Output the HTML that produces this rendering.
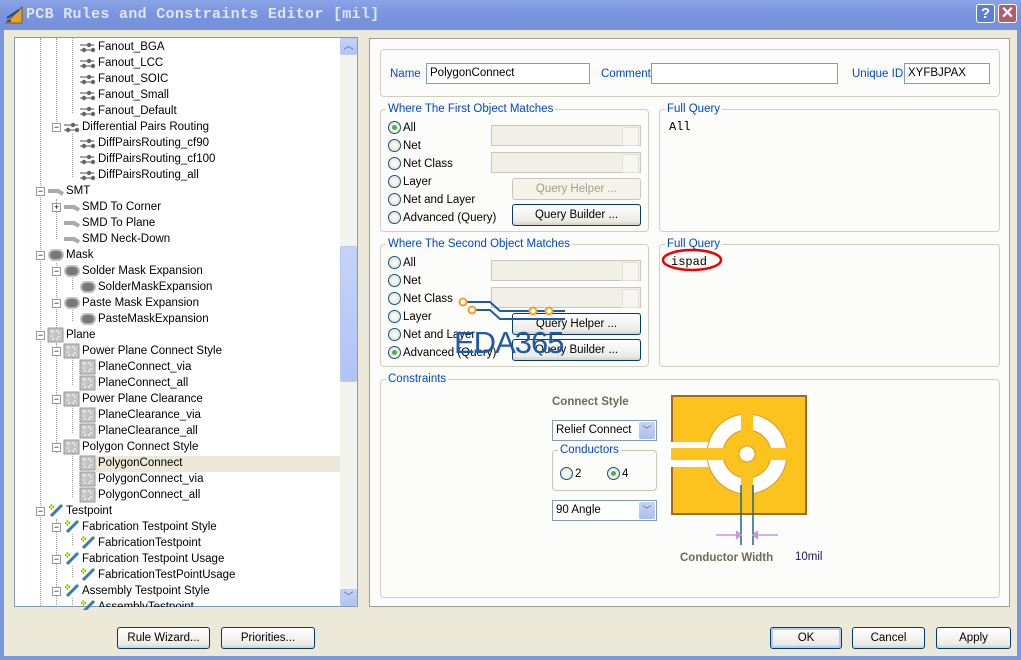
<!DOCTYPE html>
<html><head><meta charset="utf-8"><style>
*{margin:0;padding:0;box-sizing:border-box}
body{width:1021px;height:660px;overflow:hidden;background:#ece9d8;font-family:"Liberation Sans",sans-serif;font-size:11.5px;color:#000;position:relative}
.a{position:absolute}
#title{left:0;top:0;width:1021px;height:30px;background:linear-gradient(#8aa4e6,#7b96df 40%,#7490da);}
#title span{position:absolute;left:26px;top:6px;font-family:"Liberation Mono",monospace;font-weight:bold;font-size:15px;color:#dfe6f8;letter-spacing:0.3px}
.frame{background:#7b96df}
#tree{left:14px;top:37px;width:344px;height:570px;background:#fff;border:1px solid #7f9db9;overflow:hidden}
.r{position:absolute;height:16px;line-height:16px;white-space:nowrap}
.bx{position:absolute;width:9px;height:9px;border:1px solid #919b9c;background:#fff;font-size:9px;line-height:7px;text-align:center;color:#000}
.vl{position:absolute;width:0;border-left:1px dotted #a0a0a0}
.sb{position:absolute;right:0;top:0;width:17px;height:100%;background:#f4f3ee}
.sbb{position:absolute;left:0;width:17px;height:17px;background:linear-gradient(#c6d3f7,#b0c4f5);border:1px solid #b7c9f2;border-radius:2px;color:#4d6185;font-size:10px;text-align:center;line-height:15px}
#right{left:369px;top:38px;width:641px;height:569px;background:#fcfcfa;border:1px solid #a09f94}
.g{position:absolute;border:1px solid #d0d0bf;border-radius:4px}
.gt{position:absolute;top:-8px;left:5px;background:#fcfcfa;padding:0 2px;color:#0046d5;line-height:14px}
.lbl{position:absolute;color:#0046d5;line-height:14px}
.inp{position:absolute;height:21px;border:1px solid #7f9db9;background:#fff;padding-left:3px;line-height:19px}
.rad{position:absolute;width:13px;height:13px;border:1px solid #1c5180;border-radius:50%;background:radial-gradient(#fff,#dcdcd2)}
.rad.on::after{content:"";position:absolute;left:3px;top:3px;width:5px;height:5px;border-radius:50%;background:#3fb83f}
.rt{position:absolute;line-height:14px}
.cb{position:absolute;height:21px;border:1px solid #c9c7ba;background:#f0efe8}
.cb::after{content:"";position:absolute;right:1px;top:1px;width:15px;height:17px;background:#f7f6f1;border:1px solid #e2e0d6}
.cbe{position:absolute;height:21px;border:1px solid #7f9db9;background:#fff;padding-left:3px;line-height:19px}
.dd{position:absolute;right:1px;top:1px;width:16px;height:17px;background:linear-gradient(#c6d3f7,#aec0f0);border-radius:2px;color:#4d6185;font-size:9px;text-align:center;line-height:17px}
.btn{position:absolute;height:22px;border:1px solid #003c74;border-radius:3px;background:linear-gradient(#fff,#ecebe6 80%,#d6d0c5);text-align:center;line-height:20px}
.btn.dis{border-color:#c9c7ba;color:#a19e8f;background:#f5f4ea}
</style></head><body>
<div class="a frame" style="left:0;top:0;width:4px;height:660px"></div>
<div class="a frame" style="right:0;top:0;width:4px;height:660px"></div>
<div class="a frame" style="left:0;bottom:0;width:1021px;height:4px"></div>
<div id="title" class="a"><svg class="a" style="left:5px;top:6px" width="18" height="18"><path d="M1 17 L17 1 L17 17Z" fill="#e6a228" stroke="#8a5a10"/><path d="M2 15 L6 15 M2 12 L14 4" stroke="#244b9c" stroke-width="2"/></svg><span>PCB Rules and Constraints Editor [mil]</span>
<div class="a" style="left:976px;top:4px;width:19px;height:19px;background:#5a7edc;border:1px solid #fff;border-radius:3px;color:#fff;font-weight:bold;font-size:15px;text-align:center;line-height:18px">?</div>
<div class="a" style="left:998px;top:4px;width:19px;height:19px;background:#b05e6c;border:1px solid #fff;border-radius:3px;color:#fff;font-weight:bold;font-size:16px;text-align:center;line-height:17px">✕</div>
</div>

<div id="tree" class="a">
<div class="vl" style="left:25px;top:0;height:570px"></div>
<div class="vl" style="left:41px;top:0;height:90px"></div>
<div class="vl" style="left:57px;top:0;height:75px"></div>
<div class="vl" style="left:57px;top:96px;height:43px"></div>
<div class="vl" style="left:41px;top:161px;height:40px"></div>
<div class="vl" style="left:41px;top:225px;height:65px"></div>
<div class="vl" style="left:57px;top:240px;height:11px"></div>
<div class="vl" style="left:57px;top:272px;height:11px"></div>
<div class="vl" style="left:41px;top:305px;height:110px"></div>
<div class="vl" style="left:57px;top:320px;height:27px"></div>
<div class="vl" style="left:57px;top:368px;height:27px"></div>
<div class="vl" style="left:57px;top:416px;height:43px"></div>
<div class="vl" style="left:41px;top:481px;height:90px"></div>
<div class="vl" style="left:57px;top:496px;height:11px"></div>
<div class="vl" style="left:57px;top:528px;height:11px"></div>
<div class="vl" style="left:57px;top:560px;height:11px"></div>
<div style="position:absolute;left:81px;top:418px;width:245px;height:16px;background:#ece9d8"></div>
<div class="sb"><div class="sbb" style="top:0">︿</div><div class="sbb" style="top:208px;height:136px"></div><div class="sbb" style="bottom:0">﹀</div></div>
</div>
<div class="a" style="left:0;top:0">
<div class="r" style="top:39px;left:98px">Fanout_BGA</div>
<div class="r" style="top:55px;left:98px">Fanout_LCC</div>
<div class="r" style="top:71px;left:98px">Fanout_SOIC</div>
<div class="r" style="top:87px;left:98px">Fanout_Small</div>
<div class="r" style="top:103px;left:98px">Fanout_Default</div>
<div class="r" style="top:119px;left:82px">Differential Pairs Routing</div>
<div class="r" style="top:135px;left:98px">DiffPairsRouting_cf90</div>
<div class="r" style="top:151px;left:98px">DiffPairsRouting_cf100</div>
<div class="r" style="top:167px;left:98px">DiffPairsRouting_all</div>
<div class="r" style="top:183px;left:66px">SMT</div>
<div class="r" style="top:199px;left:82px">SMD To Corner</div>
<div class="r" style="top:215px;left:82px">SMD To Plane</div>
<div class="r" style="top:231px;left:82px">SMD Neck-Down</div>
<div class="r" style="top:247px;left:66px">Mask</div>
<div class="r" style="top:263px;left:82px">Solder Mask Expansion</div>
<div class="r" style="top:279px;left:98px">SolderMaskExpansion</div>
<div class="r" style="top:295px;left:82px">Paste Mask Expansion</div>
<div class="r" style="top:311px;left:98px">PasteMaskExpansion</div>
<div class="r" style="top:327px;left:66px">Plane</div>
<div class="r" style="top:343px;left:82px">Power Plane Connect Style</div>
<div class="r" style="top:359px;left:98px">PlaneConnect_via</div>
<div class="r" style="top:375px;left:98px">PlaneConnect_all</div>
<div class="r" style="top:391px;left:82px">Power Plane Clearance</div>
<div class="r" style="top:407px;left:98px">PlaneClearance_via</div>
<div class="r" style="top:423px;left:98px">PlaneClearance_all</div>
<div class="r" style="top:439px;left:82px">Polygon Connect Style</div>
<div class="r" style="top:455px;left:98px">PolygonConnect</div>
<div class="r" style="top:471px;left:98px">PolygonConnect_via</div>
<div class="r" style="top:487px;left:98px">PolygonConnect_all</div>
<div class="r" style="top:503px;left:66px">Testpoint</div>
<div class="r" style="top:519px;left:82px">Fabrication Testpoint Style</div>
<div class="r" style="top:535px;left:98px">FabricationTestpoint</div>
<div class="r" style="top:551px;left:82px">Fabrication Testpoint Usage</div>
<div class="r" style="top:567px;left:98px">FabricationTestPointUsage</div>
<div class="r" style="top:583px;left:82px">Assembly Testpoint Style</div>
<div class="r" style="top:599px;left:98px;height:8px;overflow:hidden">AssemblyTestpoint</div>
</div>
<div class="a" style="left:0;top:0">
<div class="bx" style="left:52px;top:123px">−</div>
<div class="bx" style="left:36px;top:187px">−</div>
<div class="bx" style="left:52px;top:203px">+</div>
<div class="bx" style="left:36px;top:251px">−</div>
<div class="bx" style="left:52px;top:267px">−</div>
<div class="bx" style="left:52px;top:299px">−</div>
<div class="bx" style="left:36px;top:331px">−</div>
<div class="bx" style="left:52px;top:347px">−</div>
<div class="bx" style="left:52px;top:395px">−</div>
<div class="bx" style="left:52px;top:443px">−</div>
<div class="bx" style="left:36px;top:507px">−</div>
<div class="bx" style="left:52px;top:523px">−</div>
<div class="bx" style="left:52px;top:555px">−</div>
<div class="bx" style="left:52px;top:587px">−</div>
<svg class="a" style="left:0;top:0" width="360" height="610">
<defs>
<g id="fo"><path d="M0 4H14M0 9H14" stroke="#888" stroke-width="1.5"/><circle cx="9" cy="4" r="2.2" fill="#666"/><circle cx="4" cy="9" r="2.2" fill="#666"/><circle cx="13" cy="9" r="2.2" fill="#666"/></g>
<g id="sm"><path d="M0 5H10L15 8" stroke="#aaa" stroke-width="4" fill="none"/></g>
<g id="mk"><rect x="1" y="1" width="14" height="10" rx="5" fill="#777" stroke="#bbb" stroke-width="2"/></g>
<g id="pl"><rect x="0" y="0" width="15" height="14" fill="#c4c4c4" stroke="#999"/><path d="M4 3H11V11H4Z" stroke="#fff" stroke-dasharray="2 2" fill="none"/></g>
<g id="tp"><path d="M3 13L14 2" stroke="#3a7ea8" stroke-width="3"/><path d="M1 4H6M3.5 1.5V6.5" stroke="#1a9a1a" stroke-width="1.5"/><circle cx="3.5" cy="4" r="1.5" fill="#ee0"/></g>
</defs>
<use href="#fo" x="80" y="41"/><use href="#fo" x="80" y="57"/><use href="#fo" x="80" y="73"/><use href="#fo" x="80" y="89"/><use href="#fo" x="80" y="105"/>
<use href="#fo" x="64" y="121"/><use href="#fo" x="80" y="137"/><use href="#fo" x="80" y="153"/><use href="#fo" x="80" y="169"/>
<use href="#sm" x="48" y="186"/><use href="#sm" x="64" y="202"/><use href="#sm" x="64" y="218"/><use href="#sm" x="64" y="234"/>
<use href="#mk" x="48" y="249"/><use href="#mk" x="64" y="265"/><use href="#mk" x="80" y="281"/><use href="#mk" x="64" y="297"/><use href="#mk" x="80" y="313"/>
<use href="#pl" x="48" y="328"/><use href="#pl" x="64" y="344"/><use href="#pl" x="80" y="360"/><use href="#pl" x="80" y="376"/><use href="#pl" x="64" y="392"/><use href="#pl" x="80" y="408"/><use href="#pl" x="80" y="424"/><use href="#pl" x="64" y="440"/><use href="#pl" x="80" y="456"/><use href="#pl" x="80" y="472"/><use href="#pl" x="80" y="488"/>
<use href="#tp" x="48" y="503"/><use href="#tp" x="64" y="519"/><use href="#tp" x="80" y="535"/><use href="#tp" x="64" y="551"/><use href="#tp" x="80" y="567"/><use href="#tp" x="64" y="583"/><use href="#tp" x="80" y="599"/>
</svg>
</div>

<div id="right" class="a">
<div class="g" style="left:10px;top:10px;width:620px;height:48px">
<div class="lbl" style="left:9px;top:17px">Name</div>
<div class="inp" style="left:45px;top:13px;width:164px">PolygonConnect</div>
<div class="lbl" style="left:220px;top:17px">Comment</div>
<div class="inp" style="left:270px;top:13px;width:187px"></div>
<div class="lbl" style="left:471px;top:17px">Unique ID</div>
<div class="inp" style="left:523px;top:13px;width:86px">XYFBJPAX</div>
</div>

<div class="g" style="left:10px;top:70px;width:269px;height:123px"><div class="gt">Where The First Object Matches</div>
<div class="rad on" style="left:7px;top:11px"></div><div class="rt" style="left:22px;top:11px">All</div>
<div class="rad" style="left:7px;top:29px"></div><div class="rt" style="left:22px;top:29px">Net</div>
<div class="rad" style="left:7px;top:47px"></div><div class="rt" style="left:22px;top:47px">Net Class</div>
<div class="rad" style="left:7px;top:65px"></div><div class="rt" style="left:22px;top:65px">Layer</div>
<div class="rad" style="left:7px;top:83px"></div><div class="rt" style="left:22px;top:83px">Net and Layer</div>
<div class="rad" style="left:7px;top:101px"></div><div class="rt" style="left:22px;top:101px">Advanced (Query)</div>
<div class="cb" style="left:110px;top:15px;width:150px"></div>
<div class="cb" style="left:110px;top:42px;width:150px"></div>
<div class="btn dis" style="left:131px;top:68px;width:129px">Query Helper ...</div>
<div class="btn" style="left:131px;top:94px;width:129px">Query Builder ...</div>
</div>
<div class="g" style="left:289px;top:70px;width:341px;height:123px"><div class="gt">Full Query</div>
<div class="a" style="left:9px;top:10px;font-family:'Liberation Mono',monospace;font-size:12px">All</div></div>

<div class="g" style="left:10px;top:205px;width:269px;height:123px"><div class="gt">Where The Second Object Matches</div>
<div class="rad" style="left:7px;top:11px"></div><div class="rt" style="left:22px;top:11px">All</div>
<div class="rad" style="left:7px;top:29px"></div><div class="rt" style="left:22px;top:29px">Net</div>
<div class="rad" style="left:7px;top:47px"></div><div class="rt" style="left:22px;top:47px">Net Class</div>
<div class="rad" style="left:7px;top:65px"></div><div class="rt" style="left:22px;top:65px">Layer</div>
<div class="rad" style="left:7px;top:83px"></div><div class="rt" style="left:22px;top:83px">Net and Layer</div>
<div class="rad on" style="left:7px;top:101px"></div><div class="rt" style="left:22px;top:101px">Advanced (Query)</div>
<div class="cb" style="left:110px;top:15px;width:150px"></div>
<div class="cb" style="left:110px;top:42px;width:150px"></div>
<div class="btn" style="left:131px;top:68px;width:129px">Query Helper ...</div>
<div class="btn" style="left:131px;top:94px;width:129px">Query Builder ...</div>
</div>
<div class="g" style="left:289px;top:205px;width:341px;height:123px"><div class="gt">Full Query</div>
<div class="a" style="left:11px;top:10px;font-family:'Liberation Mono',monospace;font-size:12px">ispad</div>
<svg class="a" style="left:1px;top:3px" width="64" height="26"><ellipse cx="31" cy="12" rx="29" ry="10" fill="none" stroke="#e00" stroke-width="2.5"/></svg></div>

<svg class="a" style="left:85px;top:258px" width="110" height="30"><path d="M10 5H35L45 14H120M20 13H35L45 22H120" stroke="#1f5aa8" stroke-width="2" fill="none"/><circle cx="8" cy="5" r="3.5" fill="#fff" stroke="#f0a020" stroke-width="2"/><circle cx="17" cy="13" r="3.5" fill="#fff" stroke="#f0a020" stroke-width="2"/><circle cx="78" cy="14" r="3.5" fill="#fff" stroke="#f0a020" stroke-width="2"/><circle cx="94" cy="14" r="3.5" fill="#fff" stroke="#f0a020" stroke-width="2"/></svg>
<div class="a" style="left:84px;top:289px;font-size:31px;color:#1f5aa8;line-height:30px;letter-spacing:-1px">EDA365</div>

<div class="g" style="left:10px;top:340px;width:620px;height:219px"><div class="gt">Constraints</div>
<div class="a" style="left:171px;top:16px;font-weight:bold;color:#6e6b5e">Connect Style</div>
<div class="cbe" style="left:171px;top:40px;width:105px">Relief Connect<div class="dd">﹀</div></div>
<div class="g" style="left:171px;top:70px;width:105px;height:41px;border-color:#c9c7ba"><div class="gt" style="background:#fcfcfa">Conductors</div>
<div class="rad" style="left:7px;top:16px"></div><div class="rt" style="left:22px;top:16px">2</div>
<div class="rad on" style="left:54px;top:16px"></div><div class="rt" style="left:69px;top:16px">4</div></div>
<div class="cbe" style="left:171px;top:120px;width:105px">90 Angle<div class="dd">﹀</div></div>
<svg class="a" style="left:290px;top:15px" width="160" height="190">
<rect x="1" y="1" width="134" height="118" fill="#fcc21d" stroke="#a06a2a" stroke-width="2"/>
<rect x="0" y="47" width="50" height="25" fill="#fff"/>
<circle cx="76" cy="59" r="40" fill="#fff" stroke="#d89a2a"/>
<circle cx="76" cy="59" r="24" fill="#fcc21d" stroke="#d89a2a"/>
<rect x="70" y="18" width="12" height="82" fill="#fcc21d"/>
<rect x="76" y="53" width="41" height="12" fill="#fcc21d"/>
<rect x="0" y="53" width="60" height="12" fill="#fcc21d"/>
<circle cx="76" cy="59" r="8" fill="#fff" stroke="#d89a2a"/>
<path d="M70 90V150M82 90V150" stroke="#1a6a8a" stroke-width="1.5"/>
<path d="M45 140H68M65 136L70 140L65 144M107 140H84M87 136L82 140L87 144" stroke="#c49adc" stroke-width="1.5" fill="#c49adc"/>
</svg>
<div class="a" style="left:299px;top:172px;font-weight:bold;color:#6e6b5e">Conductor Width</div>
<div class="a" style="left:414px;top:171px;color:#1a1a6a">10mil</div>
</div>
</div>

<div class="btn" style="left:117px;top:627px;width:93px">Rule Wizard...</div>
<div class="btn" style="left:221px;top:627px;width:94px">Priorities...</div>
<div class="btn" style="left:770px;top:627px;width:72px;box-shadow:inset 0 0 0 2px #b6ccf5">OK</div>
<div class="btn" style="left:852px;top:627px;width:73px">Cancel</div>
<div class="btn" style="left:936px;top:627px;width:75px">Apply</div>
</body></html>
